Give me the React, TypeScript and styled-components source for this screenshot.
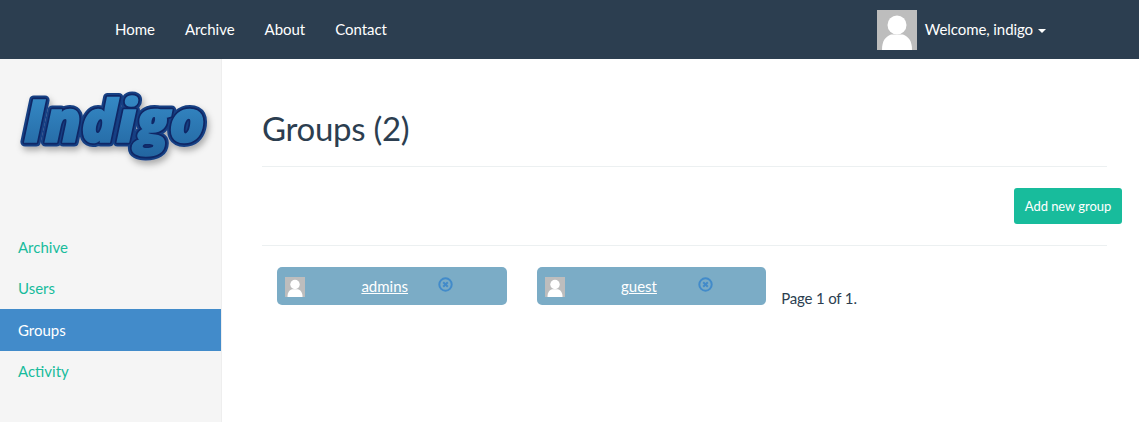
import React from "react";
import styled, { createGlobalStyle } from "styled-components";

const GlobalStyle = createGlobalStyle`
  html, body {
    margin: 0;
    padding: 0;
    background: #fff;
    font-family: Lato, "Liberation Sans", sans-serif;
    font-size: 15px;
    line-height: 21px;
    color: #2c3e50;
  }
  * { box-sizing: border-box; }
`;

const Navbar = styled.nav`
  height: 59px;
  background: #2c3e50;
  display: flex;
  align-items: center;
  padding-left: 115px;
  padding-right: 93px;
`;

const NavLinks = styled.div`
  display: flex;
  gap: 30px;
  flex: 1;
  letter-spacing: -0.03px;
`;

const NavLink = styled.a`
  color: #fff;
  font-size: 15px;
  text-decoration: none;
`;

const UserMenu = styled.div`
  display: flex;
  align-items: center;
  gap: 8px;
  color: #fff;
  letter-spacing: -0.08px;
`;

const Caret = styled.span`
  display: inline-block;
  width: 0;
  height: 0;
  margin-left: 5px;
  vertical-align: middle;
  border-top: 4px solid #fff;
  border-left: 4px solid transparent;
  border-right: 4px solid transparent;
`;

const Body = styled.div`
  display: flex;
  height: 363px;
`;

const Sidebar = styled.aside`
  width: 222px;
  flex: none;
  background: #f5f5f5;
  border-right: 1px solid #eee;
  padding-top: 25px;
`;

const LogoWrap = styled.div`
  height: 143px;
  padding-left: 18px;
`;

const SideMenu = styled.div`
  display: flex;
  flex-direction: column;
`;

const SideItem = styled.a<{ $active?: boolean }>`
  display: block;
  height: ${(p) => (p.$active ? "42px" : "41px")};
  line-height: ${(p) => (p.$active ? "42px" : "41px")};
  padding-left: 18px;
  font-size: 15px;
  color: ${(p) => (p.$active ? "#fff" : "#18bc9c")};
  background: ${(p) => (p.$active ? "#428bca" : "transparent")};
`;

const Main = styled.main`
  flex: 1;
  padding: 47px 32px 0 40px;
  min-width: 0;
`;

const Title = styled.h1`
  margin: 0;
  height: 61px;
  font-size: 33px;
  line-height: 44px;
  font-weight: 400;
  letter-spacing: -0.3px;
  color: #2c3e50;
  border-bottom: 1px solid #ecf0f1;
`;

const Toolbar = styled.div`
  display: flex;
  justify-content: flex-end;
  height: 78px;
  padding-top: 21px;
  margin-right: -15px;
`;

const AddButton = styled.button`
  width: 108px;
  height: 36px;
  border: none;
  border-radius: 3px;
  background: #18bc9c;
  color: #fff;
  font-family: inherit;
  font-size: 13px;
  letter-spacing: -0.05px;
  padding: 0;
`;

const Rule = styled.div`
  border-top: 1px solid #ecf0f1;
`;

const GroupRow = styled.div`
  display: flex;
  align-items: flex-start;
  padding: 21px 0 0 15px;
`;

const GroupCard = styled.div`
  width: 229.6px;
  height: 38px;
  margin-right: 30px;
  background: #7bacc6;
  border-radius: 5px;
  display: flex;
  align-items: flex-start;
  padding: 10px 0 0 8px;
`;

const GroupName = styled.a`
  width: 133px;
  padding-left: 56.4px;
  color: #fff;
  text-decoration: underline;
  font-size: 15px;
  line-height: 18px;
  height: 18px;
`;

const RemoveIcon = styled.svg`
  display: block;
`;

const PageNote = styled.div`
  margin: 21px 0 0 -15px;
  font-size: 15px;
  letter-spacing: -0.17px;
`;

const Avatar = ({ size }: { size: number }) => (
  <svg width={size} height={size} viewBox="0 0 40 40" style={{ display: "block", flex: "none" }}>
    <rect width="40" height="40" fill="#bdbdbd" />
    <circle cx="20" cy="15" r="9.5" fill="#fff" />
    <path d="M5 40c0-9 3-13 9-15.5h12C32 27 35 31 35 40z" fill="#fff" />
  </svg>
);

const Logo = () => (
  <svg width="196" height="84" viewBox="0 0 196 84" style={{ overflow: "visible" }}>
    <defs>
      <linearGradient id="logoFill" x1="0" y1="0" x2="0" y2="1">
        <stop offset="0" stopColor="#3a93cf" />
        <stop offset="1" stopColor="#22649f" />
      </linearGradient>
      <filter id="logoShadow" x="-10%" y="-10%" width="120%" height="130%">
        <feDropShadow dx="2" dy="4" stdDeviation="3" floodColor="#000" floodOpacity="0.3" />
      </filter>
    </defs>
    <g
      fontFamily="'Open Sans', 'Liberation Sans', sans-serif"
      fontWeight="800"
      fontStyle="italic"
      fontSize="58"
    >
      <text
        x="6"
        y="58"
        textLength="181"
        lengthAdjust="spacingAndGlyphs"
        fill="#173f83"
        stroke="#173f83"
        strokeWidth="9"
        strokeLinejoin="round"
        filter="url(#logoShadow)"
      >
        Indigo
      </text>
      <text
        x="6"
        y="58"
        textLength="181"
        lengthAdjust="spacingAndGlyphs"
        fill="#0f2766"
        stroke="#0f2766"
        strokeWidth="5"
        strokeLinejoin="round"
      >
        Indigo
      </text>
      <text
        x="6"
        y="58"
        textLength="181"
        lengthAdjust="spacingAndGlyphs"
        fill="url(#logoFill)"
        stroke="url(#logoFill)"
        strokeWidth="1.6"
      >
        Indigo
      </text>
    </g>
  </svg>
);

const Remove = () => (
  <RemoveIcon width="15" height="15" viewBox="0 0 15 15">
    <circle cx="7.5" cy="7.5" r="6.2" fill="none" stroke="#428bca" strokeWidth="2" />
    <path d="M5.2 5.2l4.6 4.6M9.8 5.2l-4.6 4.6" stroke="#428bca" strokeWidth="2" />
  </RemoveIcon>
);

const groups = ["admins", "guest"];

const App = () => (
  <>
    <GlobalStyle />
    <Navbar>
      <NavLinks>
        <NavLink>Home</NavLink>
        <NavLink>Archive</NavLink>
        <NavLink>About</NavLink>
        <NavLink>Contact</NavLink>
      </NavLinks>
      <UserMenu>
        <Avatar size={40} />
        <span>
          Welcome, indigo
          <Caret />
        </span>
      </UserMenu>
    </Navbar>
    <Body>
      <Sidebar>
        <LogoWrap>
          <Logo />
        </LogoWrap>
        <SideMenu>
          <SideItem>Archive</SideItem>
          <SideItem>Users</SideItem>
          <SideItem $active>Groups</SideItem>
          <SideItem>Activity</SideItem>
        </SideMenu>
      </Sidebar>
      <Main>
        <Title>Groups (2)</Title>
        <Toolbar>
          <AddButton>Add new group</AddButton>
        </Toolbar>
        <Rule />
        <GroupRow>
          {groups.map((name) => (
            <GroupCard key={name}>
              <Avatar size={20} />
              <GroupName>{name}</GroupName>
              <Remove />
            </GroupCard>
          ))}
          <PageNote>Page 1 of 1.</PageNote>
        </GroupRow>
      </Main>
    </Body>
  </>
);

export default App;
